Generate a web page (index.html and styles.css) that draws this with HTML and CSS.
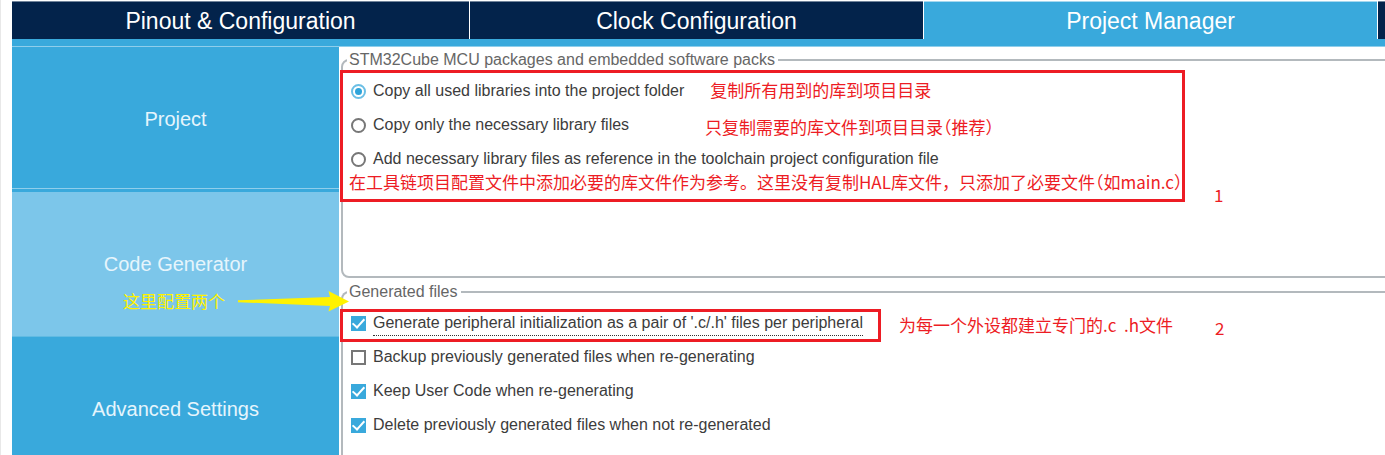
FILE: index.html
```html
<!DOCTYPE html>
<html lang="en">
<head>
<meta charset="utf-8">
<title>Project Manager</title>
<link rel="stylesheet" href="styles.css">
</head>
<body>
<div class="app">
  <nav class="tabs">
    <button class="tab" type="button">Pinout &amp; Configuration</button>
    <button class="tab" type="button">Clock Configuration</button>
    <button class="tab tab-active" type="button">Project Manager</button>
    <span class="tab"></span>
  </nav>
  <div class="workspace">
    <nav class="sidebar">
      <button class="side-item" type="button">Project</button>
      <button class="side-item side-active" type="button">Code Generator</button>
      <button class="side-item" type="button">Advanced Settings</button>
      <div class="pointer" lang="zh">
        <span>这里配置两个</span>
        <svg class="arrow" width="112" height="22" viewBox="0 0 112 22" aria-hidden="true"><path d="M0 10.3 92 7 90.500 1 111 11.500 90.500 21.500 92 16 0 12.200Z" fill="#fff200"/></svg>
      </div>
    </nav>
    <main class="content">
      <fieldset class="group packages">
        <legend>STM32Cube MCU packages and embedded software packs</legend>
        <div class="rows">
          <div class="row">
            <label class="option"><input type="radio" name="copy" checked>Copy all used libraries into the project folder</label>
            <span class="note note-copy-all" lang="zh">复制所有用到的库到项目目录</span>
          </div>
          <div class="row">
            <label class="option"><input type="radio" name="copy">Copy only the necessary library files</label>
            <span class="note note-copy-needed" lang="zh">只复制需要的库文件到项目目录<span class="paren">（</span>推荐）</span>
          </div>
          <div class="row">
            <label class="option"><input type="radio" name="copy">Add necessary library files as reference in the toolchain project configuration file</label>
          </div>
          <span class="note note-reference" lang="zh">在工具链项目配置文件中添加必要的库文件作为参考。这里没有复制HAL库文件，只添加了必要文件<span class="paren">（</span>如main.c）</span>
        </div>
        <span class="frame frame-packages"></span>
        <span class="note step-one">1</span>
      </fieldset>
      <fieldset class="group generated">
        <legend>Generated files</legend>
        <div class="rows">
          <div class="row">
            <label class="option"><input type="checkbox" checked><span class="focused">Generate peripheral initialization as a pair of '.c/.h' files per peripheral</span></label>
            <span class="note note-pair" lang="zh">为每一个外设都建立专门的.c&nbsp; .h文件</span>
            <span class="note step-two">2</span>
          </div>
          <div class="row">
            <label class="option"><input type="checkbox">Backup previously generated files when re-generating</label>
          </div>
          <div class="row">
            <label class="option"><input type="checkbox" checked>Keep User Code when re-generating</label>
          </div>
          <div class="row">
            <label class="option"><input type="checkbox" checked>Delete previously generated files when not re-generated</label>
          </div>
        </div>
        <span class="frame frame-pair"></span>
      </fieldset>
    </main>
  </div>
</div>
</body>
</html>
```
FILE: styles.css
```css
* {
  box-sizing: border-box;
}

html {
  height: 100%;
}

body {
  margin: 0;
  height: 100%;
  overflow: hidden;
  background: #fff;
  border-left: 1px solid #e8e8e8;
  color: #3c3c3c;
  font: 16px/20px "Liberation Sans", Arial, sans-serif;
}

button {
  border: 0;
  padding: 0;
  margin: 0;
  font-family: inherit;
  color: #fff;
}

.app {
  display: flex;
  flex-direction: column;
  height: 100%;
  margin-left: 11px;
  padding-top: 1px;
}

.tabs {
  display: grid;
  grid-template-columns: 457fr 453fr 453fr 7fr;
  gap: 1px;
  border-bottom: 7px solid #39a9dc;
}

.tab {
  height: 38px;
  border-top: 1px solid #71849b;
  background: #03234b;
  font-size: 23px;
  line-height: 36px;
}

.tab-active {
  background: #39a9dc;
  border-top-color: #a5d8ef;
}

.workspace {
  display: flex;
  flex: 1;
  min-height: 0;
  border-top: 1px solid #8fceeb;
}

.sidebar {
  position: relative;
  flex: none;
  width: 327px;
  background: #39a9dc;
}

.side-item {
  display: block;
  width: 100%;
  height: 145px;
  background: #39a9dc;
  box-shadow: inset 0 -3px #39a9dc, inset 0 -4px #8fceeb;
  font-size: 20px;
  color: #e6f5fc;
}

.side-active {
  background: #7cc6ea;
  box-shadow: inset 0 -1px #61bbe3;
}

.pointer {
  position: absolute;
  z-index: 2;
  left: 111px;
  top: 242px;
  display: flex;
  align-items: center;
  gap: 13px;
  font: 17px/24px "Noto Sans CJK SC", sans-serif;
  color: #fff200;
  white-space: nowrap;
}

.arrow {
  flex: none;
}

.content {
  display: flex;
  flex-direction: column;
  flex: 1;
  min-width: 0;
  padding: 3px 0 0 2px;
}

.group {
  position: relative;
  min-width: 0;
  margin: 0 -10px 0 0;
  padding: 0 0 0 8px;
  border: 2px solid #b3b9bd;
  border-radius: 8px;
}

.packages {
  min-height: 228px;
  margin-bottom: 4px;
}

.generated {
  flex: 1;
  border-bottom: 0;
  border-bottom-left-radius: 0;
}

.group legend {
  margin-left: -4px;
  padding: 0 3px 0 2px;
  color: #666;
}

.rows {
  padding-top: 4px;
}

.row {
  display: flex;
  align-items: center;
  height: 34px;
  white-space: nowrap;
}

.option {
  display: flex;
  align-items: center;
  gap: 7px;
}

.option input {
  appearance: none;
  display: grid;
  place-items: center;
  flex: none;
  width: 15px;
  height: 15px;
  margin: 0;
  border: 2px solid #777;
  background: #fff;
}

.option input[type="radio"] {
  border-radius: 50%;
}

.option input:checked {
  border-color: #6bbfe5;
}

.option input[type="radio"]:checked::after {
  content: "";
  width: 7px;
  height: 7px;
  border-radius: 50%;
  background: #2fa4da;
}

.option input[type="checkbox"]:checked {
  border: 0;
  background: #39a9dc;
}

.option input[type="checkbox"]:checked::after {
  content: "";
  width: 5px;
  height: 10px;
  margin-bottom: 3px;
  border: solid #fff;
  border-width: 0 2px 2px 0;
  transform: rotate(42deg);
}

.focused {
  margin-top: 3px;
  padding-bottom: 2px;
  border-bottom: 1px dotted #333;
}

.note {
  font: 17px/24px "Noto Sans CJK SC", sans-serif;
  color: #ed1c24;
  white-space: nowrap;
}

.paren {
  font-feature-settings: "halt";
}

.note-copy-all {
  margin: -2px 0 0 26px;
}

.note-copy-needed {
  margin: 4px 0 0 76px;
}

.note-reference {
  display: block;
  margin: -6px 0 0 -2px;
}

.note-pair {
  margin: 4px 0 0 36px;
}

.step-one {
  position: absolute;
  left: 871px;
  top: 113px;
}

.step-two {
  margin: 10px 0 0 42px;
}

.frame {
  position: absolute;
  left: -3px;
  border: 3px solid #ed1c24;
  pointer-events: none;
}

.frame-packages {
  top: 0;
  width: 845px;
  height: 132px;
}

.frame-pair {
  top: 7px;
  width: 541px;
  height: 33px;
}
```
